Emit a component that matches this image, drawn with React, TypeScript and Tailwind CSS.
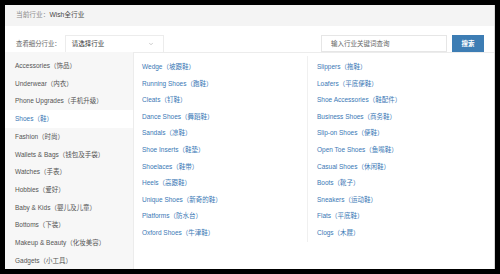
import { ChevronDown } from "lucide-react";

const sideItems = [
  "Accessories（饰品）",
  "Underwear（内衣）",
  "Phone Upgrades（手机升级）",
  "Shoes（鞋）",
  "Fashion（时尚）",
  "Wallets & Bags（钱包及手袋）",
  "Watches（手表）",
  "Hobbies（爱好）",
  "Baby & Kids（婴儿及儿童）",
  "Bottoms（下装）",
  "Makeup & Beauty（化妆美容）",
  "Gadgets（小工具）",
];

const colA = [
  "Wedge（坡跟鞋）",
  "Running Shoes（跑鞋）",
  "Cleats（钉鞋）",
  "Dance Shoes（舞蹈鞋）",
  "Sandals（凉鞋）",
  "Shoe Inserts（鞋垫）",
  "Shoelaces（鞋带）",
  "Heels（高跟鞋）",
  "Unique Shoes（新奇的鞋）",
  "Platforms（防水台）",
  "Oxford Shoes（牛津鞋）",
];

const colB = [
  "Slippers（拖鞋）",
  "Loafers（平底便鞋）",
  "Shoe Accessories（鞋配件）",
  "Business Shoes（商务鞋）",
  "Slip-on Shoes（便鞋）",
  "Open Toe Shoes（鱼嘴鞋）",
  "Casual Shoes（休闲鞋）",
  "Boots（靴子）",
  "Sneakers（运动鞋）",
  "Flats（平底鞋）",
  "Clogs（木屐）",
];

const font = "font-['Liberation_Sans','Noto_Sans_CJK_SC',sans-serif]";

export default function App() {
  const active = "Shoes（鞋）";

  return (
    <div className={`w-[500px] h-[274px] bg-black p-[5px] ${font}`}>
      <div className="h-full bg-white border-r border-[#d8d8d8] flex flex-col">
        <div className="h-[21px] shrink-0 bg-[#f4f4f4] flex items-center pl-[11px] text-[6.7px]">
          <span className="text-[#8a8a8a]">当前行业：</span>
          <span className="text-[#444]">Wish全行业</span>
        </div>

        <div className="h-[26px] shrink-0 flex items-end pl-[11px] pr-[10px]">
          <div className="h-[17px] flex items-center text-[6.4px] text-[#666] mr-[4px]">查看细分行业：</div>
          <div className="h-[17px] w-[99px] bg-white border border-b-0 border-[#ececec] flex items-center justify-between pl-[6px] pr-[9px] text-[6.5px] text-[#333]">
            <span>请选择行业</span>
            <ChevronDown className="w-[6px] h-[6px] text-[#999]" strokeWidth={2} />
          </div>
          <div className="flex-1" />
          <div className="h-[17px] w-[126px] border border-[#e6e6e6] flex items-center pl-[9px] text-[6.5px] text-[#666] self-start mt-[9px]">
            输入行业关键词查询
          </div>
          <button className="ml-[5px] h-[17px] w-[32px] bg-[#3d7db4] text-white text-[6.5px] font-bold self-start mt-[9px]">
            搜索
          </button>
        </div>

        <div className="flex flex-1 min-h-0">
          <div className="w-[128px] shrink-0 bg-[#f7f7f7] pt-[5px]">
            {sideItems.map((s) => (
              <div
                key={s}
                className={`h-[17.73px] flex items-center pl-[10px] text-[6.5px] whitespace-nowrap ${
                  s === active ? "bg-white text-[#3a78b5]" : "text-[#555]"
                }`}
              >
                {s}
              </div>
            ))}
          </div>

          <div className="flex-1 flex items-start border-l border-t border-[#ececec] pt-[3px]">
            <div className="w-[173px] pt-[2.7px] pl-[8px]">
              {colA.map((s) => (
                <div key={s} className="h-[16.6px] flex items-center text-[6.5px] text-[#3a78b5] whitespace-nowrap">
                  {s}
                </div>
              ))}
            </div>
            <div className="flex-1 pt-[2.7px] pl-[9px] border-l border-[#f0f0f0] pb-[0.7px]">
              {colB.map((s) => (
                <div key={s} className="h-[16.6px] flex items-center text-[6.5px] text-[#3a78b5] whitespace-nowrap">
                  {s}
                </div>
              ))}
            </div>
          </div>
        </div>
      </div>
    </div>
  );
}
